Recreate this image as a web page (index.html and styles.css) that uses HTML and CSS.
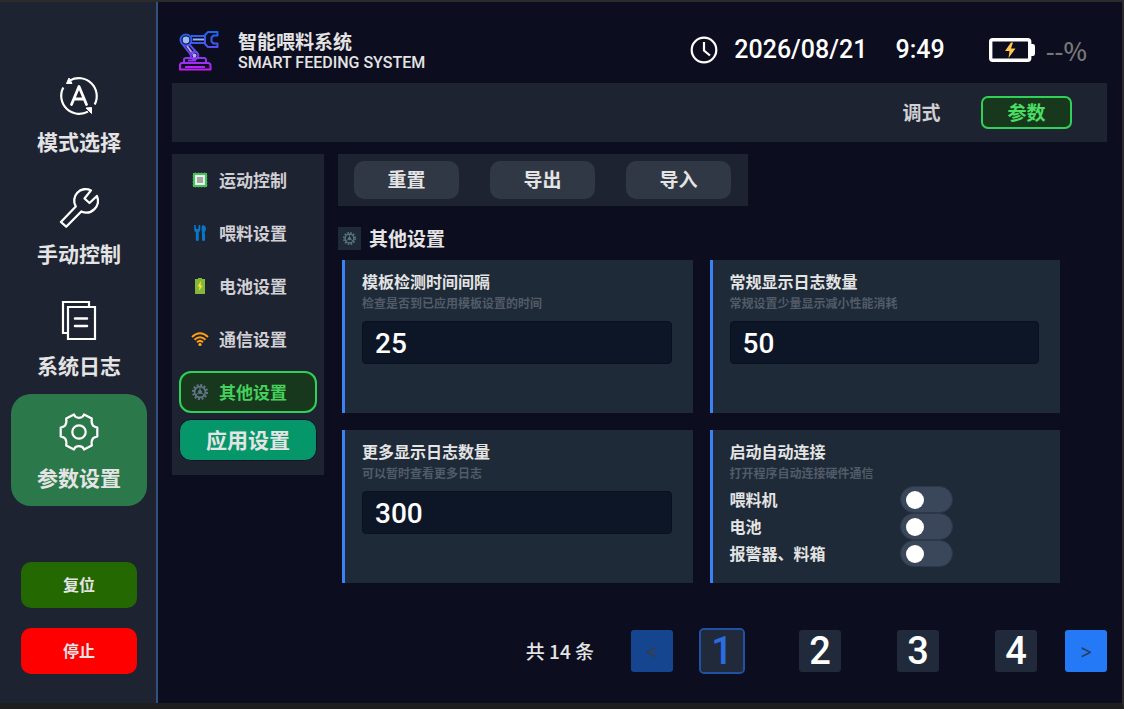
FILE: index.html
```html
<!DOCTYPE html>
<html lang="zh-CN">
<head>
<meta charset="utf-8">
<title>智能喂料系统</title>
<link rel="stylesheet" href="styles.css">
</head>
<body>
<svg class="defs" aria-hidden="true">
  <defs>
    <linearGradient id="arm" gradientUnits="userSpaceOnUse" x1="0" y1="0" x2="0" y2="40">
      <stop offset="0" stop-color="#1668f0"/><stop offset=".45" stop-color="#5a4cf0"/><stop offset="1" stop-color="#c81cf5"/>
    </linearGradient>
    <symbol id="cog" viewBox="0 0 16 16">
      <circle cx="8" cy="8" r="7" fill="none" stroke="currentColor" stroke-width="2" stroke-dasharray="2 1.665"/>
      <circle cx="8" cy="8" r="5.4" fill="none" stroke="currentColor" stroke-width="1.6"/>
      <path d="M8 8V3M8 8l-4.2 2.8M8 8l4.2 2.8" stroke="currentColor" stroke-width="1"/>
      <circle cx="8" cy="8" r="2" fill="currentColor"/>
    </symbol>
  </defs>
</svg>
<div class="app">
  <aside class="sidebar">
    <nav class="nav">
      <a class="nav-item" href="#mode">
        <svg class="nav-icon" viewBox="0 0 38 38"><g fill="none" stroke="#fff" stroke-width="2.200"><path d="M3.300 10.500A18 18 0 0 0 28 34.600"/><path d="M10 3.400A18 18 0 0 1 34.700 27.500"/><path d="M11.500 27.500L19 9.500l7.500 18M14.400 22h9.200" stroke-width="2.800" stroke-linejoin="round" stroke-linecap="round"/></g><path d="M6.500 6.500h5.500L9 1zM26 31l5.500-.5v6z" fill="#fff" stroke="#fff"/></svg>
        <span>模式选择</span>
      </a>
      <a class="nav-item" href="#manual">
        <svg class="nav-icon" viewBox="0 0 38 38"><path d="M31 1.400A11.500 11.500 0 0 0 15.800 17.500L.9 33l5.300 4.700L21.300 22.500A11.800 11.800 0 0 0 36.900 7L29.500 14l-5-4.500z" fill="none" stroke="#fff" stroke-width="2.300" stroke-linejoin="round"/></svg>
        <span>手动控制</span>
      </a>
      <a class="nav-item" href="#log">
        <svg class="nav-icon" viewBox="0 0 38 38"><g fill="none" stroke="#fff" stroke-width="2.200"><path d="M8 32H3V1h26v5"/><path d="M8 6h27v32H8z"/><path d="M15 17.500h12M15 25h12" stroke-width="2.500" stroke-linecap="round"/></g></svg>
        <span>系统日志</span>
      </a>
      <a class="nav-item active" href="#params" aria-current="page">
        <svg class="nav-icon" viewBox="0 0 38 38"><g fill="none" stroke="#fff" stroke-width="2.200" stroke-linejoin="round"><path d="M14 1.500Q15 4.800 19 4.800T24 1.500L31.800 5.500Q31 10 33 12.600Q34.500 14 37.300 14.600V23.400Q34.500 24 33 25.400Q31 28 31.800 32.500L24 36.500Q23 33.200 19 33.200T14 36.500L6.200 32.500Q7 28 5 25.400Q3.500 24 .7 23.400V14.600Q3.500 14 5 12.600Q7 10 6.200 5.500z"/><circle cx="19" cy="19" r="6.700"/></g></svg>
        <span>参数设置</span>
      </a>
    </nav>
    <div class="machine">
      <button class="machine-button reset" type="button">复位</button>
      <button class="machine-button stop" type="button">停止</button>
    </div>
  </aside>
  <main class="main">
    <header class="header">
      <svg class="logo" viewBox="0 0 40 40"><g fill="none" stroke="url(#arm)" stroke-width="2" stroke-linejoin="round"><circle cx="7" cy="9" r="5.500"/><path d="M12 5h14v7H12"/><path d="M14 8.500h12" stroke="#8fb4ff"/><path d="M26 4l3-3h9.500v3.500h-4l-2 2v4l2 2h4V16H29l-3-3z"/><path d="M4 14l8 10M10 13l8 9"/><path d="M8 15l6 8" stroke="#b3a6ff"/><circle cx="15.500" cy="24.500" r="3.800"/><path d="M5 32v-3q0-2 2-2h18q2 0 2 2v3M3 32h26q2.500 0 2.500 2.500V38.500H1V34.500Q1 32 3 32z"/><path d="M9 29.500h8M6 36h20"/></g><circle cx="7" cy="9" r="3.400" fill="#9abaff"/><circle cx="15.500" cy="24.500" r="2" fill="#b5adff"/></svg>
      <div class="brand">
        <h1 class="brand-name">智能喂料系统</h1>
        <p class="brand-sub">SMART FEEDING SYSTEM</p>
      </div>
      <div class="status">
        <svg class="clock" viewBox="0 0 28 28"><g fill="none" stroke="#fff" stroke-width="2.200"><circle cx="14" cy="14" r="12.300"/><path d="M14 6v8.500l6 5"/></g></svg>
        <time class="date">2026/08/21</time>
        <time class="time">9:49</time>
        <svg class="battery" viewBox="0 0 46 24"><rect x="1.700" y="1.700" width="39" height="20.600" rx="2" fill="none" stroke="#fff" stroke-width="3.400"/><path d="M42 6h2q2 0 2 3v6q0 3-2 3h-2z" fill="#fff"/><path d="M22 4.500l-6 8.500h4.500l-1 7 7-9.500H22l2-6z" fill="#ffc94d"/></svg>
        <span class="charge">--%</span>
      </div>
    </header>
    <nav class="tabs">
      <button class="tab" type="button">调式</button>
      <button class="tab active" type="button">参数</button>
    </nav>
    <div class="content">
      <aside class="menu">
        <a class="menu-item" href="#motion"><svg class="menu-icon" viewBox="0 0 18 18"><path d="M4.500 1v16M7.500 1v16M10.500 1v16M13.500 1v16M1 5h16M1 8h16M1 11h16M1 14h16" stroke="#4b5b75"/><path d="M2 2h14v14H2z" fill="#43c553"/><path d="M5 5h8v8H5z" fill="#9fa8a5" stroke="#eef5ee" stroke-width="1.800"/></svg>运动控制</a>
        <a class="menu-item" href="#feed"><svg class="menu-icon" viewBox="0 0 18 18"><path d="M6.300 8v7.500M12.500 10v5.500" stroke="#0877c8" stroke-width="3" stroke-linecap="round"/><path d="M3.200 1v5q0 2 3 3 3-1 3-3V1H7.800l-.6 4H5.200L4.600 1z" fill="#0877c8"/><path d="M11 10L10.500 4q0-3 2-3 2.500 1 2.500 3.500T13.500 8v2z" fill="#0877c8"/></svg>喂料设置</a>
        <a class="menu-item" href="#battery"><svg class="menu-icon" viewBox="0 0 18 18"><path d="M4 2h3V1h4v1h3v15H4z" fill="#82b73c"/><path d="M10 4L6.500 9.500h2L8 14l3.500-5.500h-2z" fill="#ffe52e"/></svg>电池设置</a>
        <a class="menu-item" href="#network"><svg class="menu-icon" viewBox="0 0 18 18"><g fill="none" stroke="#ff9d12" stroke-width="2"><path d="M1 7q8-7.500 16 0M3.500 9.800q5.500-5 11 0M6 12.200q3-2.700 6 0"/></g><circle cx="9" cy="14.500" r="1.600" fill="#ffac16"/></svg>通信设置</a>
        <a class="menu-item active" href="#other" aria-current="page"><svg class="menu-icon cog"><use href="#cog"/></svg>其他设置</a>
        <button class="apply" type="button">应用设置</button>
      </aside>
      <section class="panel">
        <div class="toolbar">
          <button class="tool" type="button">重置</button>
          <button class="tool" type="button">导出</button>
          <button class="tool" type="button">导入</button>
        </div>
        <h2 class="section-title"><span class="section-badge"><svg class="section-icon"><use href="#cog"/></svg></span>其他设置</h2>
        <div class="cards">
          <div class="card">
            <label class="card-title" for="interval">模板检测时间间隔</label>
            <p class="card-note">检查是否到已应用模板设置的时间</p>
            <input class="field" id="interval" type="text" value="25">
          </div>
          <div class="card">
            <label class="card-title" for="normal">常规显示日志数量</label>
            <p class="card-note">常规设置少量显示减小性能消耗</p>
            <input class="field" id="normal" type="text" value="50">
          </div>
          <div class="card">
            <label class="card-title" for="more">更多显示日志数量</label>
            <p class="card-note">可以暂时查看更多日志</p>
            <input class="field" id="more" type="text" value="300">
          </div>
          <div class="card">
            <h3 class="card-title">启动自动连接</h3>
            <p class="card-note">打开程序自动连接硬件通信</p>
            <div class="switches">
              <label class="switch-row"><span class="switch-label">喂料机</span><input class="switch" type="checkbox"></label>
              <label class="switch-row"><span class="switch-label">电池</span><input class="switch" type="checkbox"></label>
              <label class="switch-row"><span class="switch-label">报警器、料箱</span><input class="switch" type="checkbox"></label>
            </div>
          </div>
        </div>
      </section>
    </div>
    <nav class="pagination">
      <span class="total">共 14 条</span>
      <button class="page step" type="button" disabled>&lt;</button>
      <div class="pages">
        <button class="page current" type="button">1</button>
        <button class="page" type="button">2</button>
        <button class="page" type="button">3</button>
        <button class="page" type="button">4</button>
      </div>
      <button class="page step" type="button">&gt;</button>
    </nav>
  </main>
</div>
</body>
</html>
```
FILE: styles.css
```css
* { box-sizing: border-box; margin: 0; }
body {
  min-height: 100vh;
  display: flex;
  background: #0c0d1f;
  border: solid #2b2b2b;
  border-width: 2px 2px 0 0;
  border-bottom: 6px solid #1e1e1e;
  color: #e4e4e4;
  font: 700 16px/24px "Noto Sans CJK SC", sans-serif;
}
button, input { font: inherit; color: inherit; border: 0; padding: 0; }
button { padding-bottom: 2px; }
a { color: inherit; text-decoration: none; }
svg { display: block; flex: none; }
.defs { position: absolute; width: 0; height: 0; }
.app { flex: 1; display: flex; }

.sidebar {
  flex: none;
  width: 158px;
  padding: 56px 9px 0 11px;
  background: #1e2332;
  border-right: 2px solid #34507c;
}
.nav-item {
  display: flex;
  flex-direction: column;
  align-items: center;
  gap: 10px;
  padding: 19px 0 13px;
  border-radius: 20px;
  font-size: 21px;
  line-height: 32px;
}
.nav-item.active { background: #2b794b; }
.nav-icon { width: 40px; height: 38px; overflow: visible; }
.machine { display: flex; flex-direction: column; gap: 20px; padding: 56px 10px 0; }
.machine-button { height: 46px; border-radius: 10px; }
.reset { background: #236800; }
.stop { background: #f00; }

.main { flex: 1; display: flex; flex-direction: column; padding: 0 15px 31px 14px; }
.header { display: flex; align-items: flex-start; padding: 28px 20px 9px 6px; }
.logo { width: 40px; height: 40px; margin: 1px 0 0 1px; }
.brand { margin-left: 19px; line-height: 22px; }
.brand-name { font-size: 19px; line-height: 22px; }
.brand-sub { font-family: Roboto, sans-serif; font-size: 16px; font-weight: 500; line-height: 22px; }
.status { display: flex; align-items: center; margin-left: auto; font: 500 25px/40px Roboto, sans-serif; color: #fff; }
.clock { width: 28px; height: 28px; }
.date { margin-left: 16px; }
.time { margin-left: 28px; }
.battery { width: 46px; height: 24px; margin-left: 44px; }
.charge { margin-left: 11px; color: #777; font-family: "Noto Sans CJK SC", sans-serif; }

.tabs { display: flex; justify-content: flex-end; gap: 14px; padding: 13px 35px; background: #1e2332; }
.tab { width: 91px; height: 33px; border-radius: 7px; background: none; font-size: 19px; color: #d0d0d4; }
.tab.active { background: #18381e; border: 2px solid #30d158; color: #4ade63; }

.content { display: flex; align-items: flex-start; gap: 14px; padding-top: 12px; }
.menu {
  flex: none;
  width: 152px;
  display: flex;
  flex-direction: column;
  gap: 11px;
  padding: 5px 7px 14px;
  background: #1e2332;
  color: #d0d0d4;
}
.menu-item {
  display: flex;
  align-items: center;
  gap: 10px;
  height: 42px;
  padding: 0 10px;
  border: 2px solid transparent;
  border-radius: 12px;
  font-size: 17px;
}
.menu-item.active { background: #18381e; border-color: #30d158; color: #45d05c; }
.menu-icon { width: 18px; height: 18px; }
.menu-icon.cog { padding: 1px; color: #64748b; }
.apply {
  height: 42px;
  margin-top: -5px;
  background: #059669;
  border: 1px solid #0b1420;
  border-radius: 12px;
  color: #e4e4e4;
  font-size: 21px;
}

.panel { flex: 1; padding-right: 47px; }
.toolbar { display: flex; gap: 31px; width: fit-content; padding: 7px 17px 7px 16px; background: #1e2332; }
.tool { width: 105px; height: 38px; border-radius: 10px; background: #303846; font-size: 19px; }
.section-title { display: flex; align-items: center; gap: 8px; margin: 20px 0 10px; font-size: 19px; line-height: 24px; }
.section-badge { display: grid; place-items: center; width: 23px; height: 23px; background: #1e2a37; color: #5b7783; }
.section-icon { width: 13px; height: 13px; }
.cards { display: grid; grid-template-columns: 1fr 1fr; gap: 17px; margin-left: 4px; }
.card {
  min-height: 153px;
  padding: 9px 21px 14px 17px;
  background: #1e2a37;
  border-left: 3px solid #3b82f6;
}
.card-title { display: block; font-size: 16px; }
.card-note { font-size: 12px; line-height: 20px; color: #525b69; }
.field {
  display: block;
  width: 100%;
  height: 43px;
  margin-top: 8px;
  padding: 2px 12px 0;
  background: #0d1626;
  border: 1px solid #0a111e;
  border-radius: 4px;
  color: #fff;
  font: 500 28px Roboto, sans-serif;
}
.switches { padding-top: 3px; }
.switch-row { display: flex; align-items: center; }
.switch-label { width: 170px; line-height: 27px; }
.switch {
  appearance: none;
  display: flex;
  align-items: center;
  width: 53px;
  height: 27px;
  margin: 0;
  padding: 0 5px;
  border-radius: 14px;
  background: #3a465a;
  border: 1px solid #2c3748;
}
.switch::before { content: ""; width: 18px; height: 18px; border-radius: 50%; background: #fff; }
.switch:checked { justify-content: flex-end; background: #30d158; }

.pagination { display: flex; align-items: center; justify-content: flex-end; gap: 28px; margin-top: auto; }
.total { margin-right: 9px; font-weight: 500; font-size: 19px; }
.pages { display: flex; gap: 56px; }
.page { width: 42px; height: 42px; padding: 0; border-radius: 3px; background: #202a3a; color: #fff; font: 500 38px/42px Roboto, sans-serif; }
.page.current { color: #2b6be0; outline: 2px solid #2151a5; }
.page.step { background: #2479f7; color: #2b3e63; font: 400 20px/42px Inter, sans-serif; }
.page.step:disabled { background: #15458f; color: #3b3c49; }
```
